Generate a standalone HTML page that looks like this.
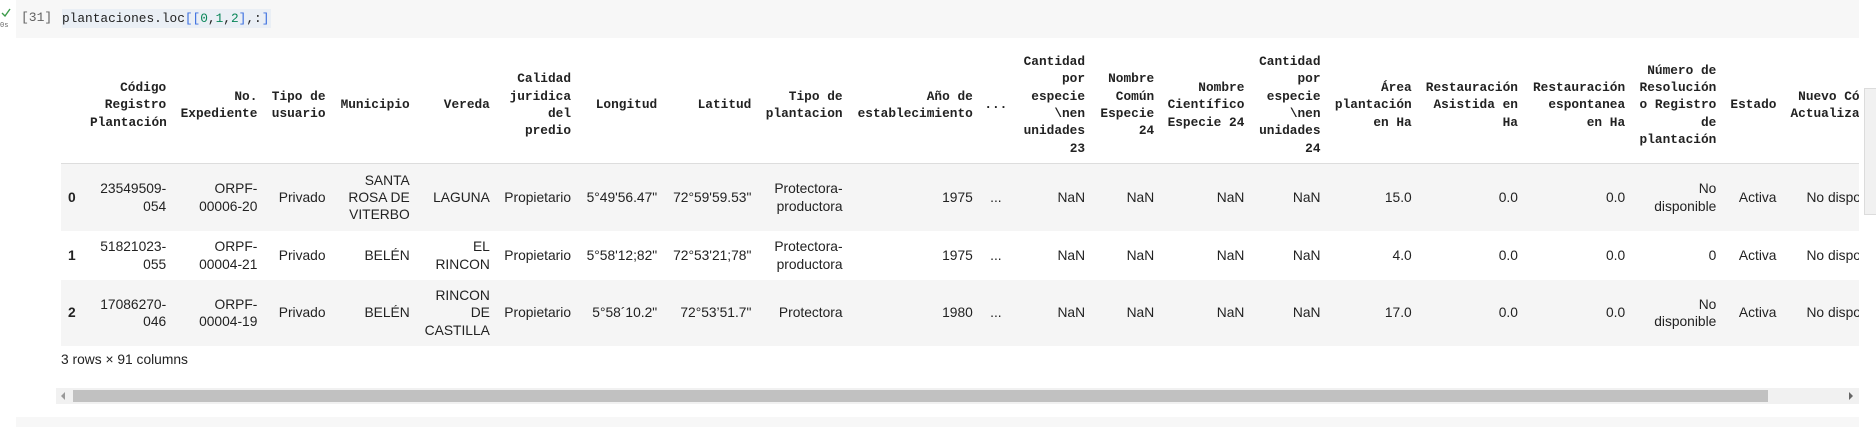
<!DOCTYPE html>
<html><head><meta charset="utf-8">
<style>
body{margin:0;width:1876px;height:422px;background:#fff;position:relative;overflow:hidden;font-family:"Liberation Sans",Arial,sans-serif}
.top{position:absolute;left:16px;top:0;width:1843px;height:38px;background:#f7f7f7}
.bot{position:absolute;left:16px;top:417px;width:1843px;height:10px;background:#f7f7f7}
.num{position:absolute;left:21px;top:10px;font:13px "Liberation Mono",monospace;color:#616161}
.code{position:absolute;left:62px;top:9px;height:19px;padding-right:2px;background:#eaeff5;font:12.8px/19px "Liberation Mono",monospace;color:#222}
.b{color:#3a6ee0}.n{color:#098658}
.chk{position:absolute;left:1px;top:8px}
.os{position:absolute;left:0;top:22px;font:7px "Liberation Mono",monospace;color:#666}
.wrap{position:absolute;left:61px;top:47px;width:1798px;height:300px;overflow:hidden}
table{border-collapse:collapse;table-layout:fixed;width:1900px}
td,th{padding:0;white-space:nowrap;text-align:right;line-height:17.3px}
th{font:bold 12.8px/17.3px "Liberation Mono",monospace;color:#222;height:116px;vertical-align:middle;border-bottom:1px solid #ddd}
td{font-size:13.8px;color:#222;vertical-align:middle}
td.i{font-weight:bold;text-align:left;padding-left:7px}
tr.g td{background:#f5f5f5}
tr.r0 td{height:67px}tr.r1 td{height:49px}tr.r2 td{height:66px}
th.l,td.l{text-align:left}
.foot{position:absolute;left:61px;top:352px;font-size:13.8px;color:#222}
.htrack{position:absolute;left:56px;top:388px;width:1803px;height:16px;background:#f1f1f1}
.hthumb{position:absolute;left:73px;top:390px;width:1695px;height:12px;background:#c1c1c1}
.vtrack{position:absolute;left:1864px;top:88px;width:11px;height:125px;background:#f1f1f1;border:1px solid #dcdcdc;border-right:none}
</style></head><body>
<div class="top"></div>
<svg class="chk" width="10" height="9" viewBox="0 0 10 9"><path d="M1 5 L4 8 L9 1" stroke="#3c9a4a" stroke-width="1.4" fill="none"/></svg>
<div class="os">0s</div>
<div class="num">[31]</div>
<div class="code">plantaciones.loc<span class="b">[[</span><span class="n">0</span>,<span class="n">1</span>,<span class="n">2</span><span class="b">]</span>,:<span class="b">]</span></div>
<div class="wrap">
<table>
<colgroup>
<col style="width:29px"><col style="width:76px"><col style="width:91px"><col style="width:68px"><col style="width:84px"><col style="width:80px"><col style="width:81px"><col style="width:86px"><col style="width:94px"><col style="width:91px"><col style="width:130px"><col style="width:36px"><col style="width:76px"><col style="width:69px"><col style="width:90px"><col style="width:76px"><col style="width:91px"><col style="width:106px"><col style="width:107px"><col style="width:91px"><col style="width:60px"><col style="width:184px">
</colgroup>
<tr><th></th><th>Código<br>Registro<br>Plantación</th><th>No.<br>Expediente</th><th>Tipo de<br>usuario</th><th>Municipio</th><th>Vereda</th><th>Calidad<br>juridica<br>del<br>predio</th><th>Longitud</th><th>Latitud</th><th>Tipo de<br>plantacion</th><th>Año de<br>establecimiento</th><th style="text-align:center;padding-left:10px">...</th><th>Cantidad<br>por<br>especie<br>\nen<br>unidades<br>23</th><th>Nombre<br>Común<br>Especie<br>24</th><th>Nombre<br>Científico<br>Especie 24</th><th>Cantidad<br>por<br>especie<br>\nen<br>unidades<br>24</th><th>Área<br>plantación<br>en Ha</th><th>Restauración<br>Asistida en<br>Ha</th><th>Restauración<br>espontanea<br>en Ha</th><th>Número de<br>Resolución<br>o Registro<br>de<br>plantación</th><th>Estado</th><th class="l" style="padding-left:14px">&nbsp;Nuevo Código<br>Actualizado</th></tr>
<tr class="g r0"><td class="i">0</td><td>23549509-<br>054</td><td>ORPF-<br>00006-20</td><td>Privado</td><td>SANTA<br>ROSA DE<br>VITERBO</td><td>LAGUNA</td><td>Propietario</td><td>5°49'56.47"</td><td>72°59'59.53"</td><td>Protectora-<br>productora</td><td>1975</td><td style="text-align:center;padding-left:10px">...</td><td>NaN</td><td>NaN</td><td>NaN</td><td>NaN</td><td>15.0</td><td>0.0</td><td>0.0</td><td>No<br>disponible</td><td>Activa</td><td class="l" style="padding-left:30px">No disponible</td></tr>
<tr class="r1"><td class="i">1</td><td>51821023-<br>055</td><td>ORPF-<br>00004-21</td><td>Privado</td><td>BELÉN</td><td>EL<br>RINCON</td><td>Propietario</td><td>5°58'12;82"</td><td>72°53'21;78"</td><td>Protectora-<br>productora</td><td>1975</td><td style="text-align:center;padding-left:10px">...</td><td>NaN</td><td>NaN</td><td>NaN</td><td>NaN</td><td>4.0</td><td>0.0</td><td>0.0</td><td>0</td><td>Activa</td><td class="l" style="padding-left:30px">No disponible</td></tr>
<tr class="g r2"><td class="i">2</td><td>17086270-<br>046</td><td>ORPF-<br>00004-19</td><td>Privado</td><td>BELÉN</td><td>RINCON<br>DE<br>CASTILLA</td><td>Propietario</td><td>5°58´10.2"</td><td>72°53’51.7"</td><td>Protectora</td><td>1980</td><td style="text-align:center;padding-left:10px">...</td><td>NaN</td><td>NaN</td><td>NaN</td><td>NaN</td><td>17.0</td><td>0.0</td><td>0.0</td><td>No<br>disponible</td><td>Activa</td><td class="l" style="padding-left:30px">No disponible</td></tr>
</table>
</div>
<div class="foot">3 rows × 91 columns</div>
<div class="htrack"></div>
<div class="hthumb"></div>
<svg style="position:absolute;left:61px;top:392px" width="5" height="8"><path d="M4 0 L0 4 L4 8Z" fill="#999"/></svg>
<svg style="position:absolute;left:1849px;top:392px" width="5" height="8"><path d="M0 0 L4 4 L0 8Z" fill="#666"/></svg>
<div class="vtrack"></div>
<div class="bot"></div>
</body></html>
